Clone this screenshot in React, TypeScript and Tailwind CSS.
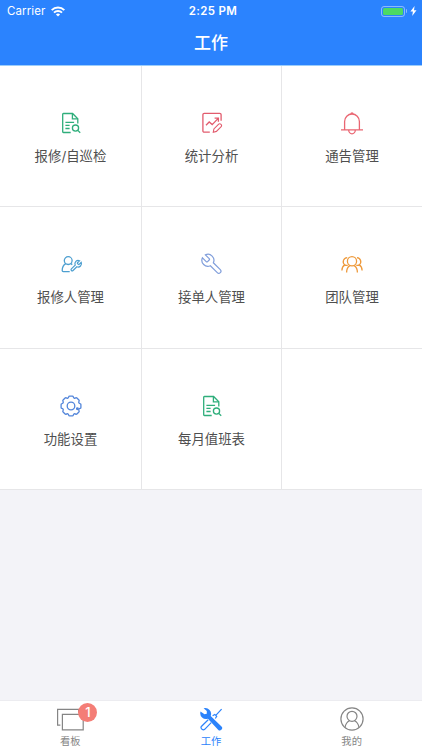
import type { ReactNode } from 'react'

const FONT = "font-['Inter','Noto_Sans_CJK_SC',sans-serif]"

function Icon({ className, children }: { className: string; children: ReactNode }) {
  return (
    <svg
      viewBox="0 0 22 22"
      fill="none"
      stroke="currentColor"
      strokeWidth="1.3"
      className={`h-[22px] w-[22px] overflow-visible ${className}`}
    >
      {children}
    </svg>
  )
}

function DocSearchIcon() {
  return (
    <Icon className="text-[#2fae7b]">
      <path d="M10.7 20.5H3.4a.7.7 0 0 1-.7-.7V2.2a.7.7 0 0 1 .7-.7h9.2l5.2 5.3v4.6" />
      <path d="M12.4 1.5v5.4h5.4M5.4 10.3h8.7M5.4 13.3h4.2M5.4 16.5h4.2" />
      <circle cx="15.5" cy="16.1" r="3.1" />
      <path d="m17.8 18.4 2.4 2.4" />
    </Icon>
  )
}

function ChartIcon() {
  return (
    <Icon className="text-[#e25c6e]">
      <path d="M8.8 20.2H3.2a1.3 1.3 0 0 1-1.3-1.3V2.7a1.3 1.3 0 0 1 1.3-1.3h15.6a1.3 1.3 0 0 1 1.3 1.3v6" />
      <path d="M5 13.2 8.2 10l3 2.6 6-6.2M13.6 6.2h3.8v3.6" />
      <path d="m12.3 20.2.6-3.3 4.8-4.8a1.4 1.4 0 0 1 2 0l.5.5a1.4 1.4 0 0 1 0 2l-4.8 4.8z" strokeWidth="1.1" />
    </Icon>
  )
}

function BellIcon() {
  return (
    <Icon className="text-[#ea6672]">
      <path d="M3.6 17.7V9.4a7.4 7.4 0 0 1 14.8 0v8.3M0 17.8h22M7.7 18a3.3 3.8 0 0 0 6.6 0" />
      <path d="M10 2a1 1 0 1 1 2 0" />
    </Icon>
  )
}

function UserWrenchIcon() {
  return (
    <Icon className="text-[#4d9fd0]">
      <circle cx="8.2" cy="7.6" r="3.9" />
      <path d="M5.8 10.6c-2.3 1.3-3.6 3.7-3.6 6.9 0 .7.4 1.1 1.1 1.1h6.4M10.8 10.6l1.5 1" />
      <path
        transform="translate(9.4 6.3) scale(.55)"
        strokeWidth="2.2"
        d="M14.7 6.3a1 1 0 0 0 0 1.4l1.6 1.6a1 1 0 0 0 1.4 0l3.77-3.77a6 6 0 0 1-7.94 7.94l-6.91 6.91a2.12 2.12 0 0 1-3-3l6.91-6.91a6 6 0 0 1 7.94-7.94l-3.76 3.76z"
      />
    </Icon>
  )
}

function WrenchIcon() {
  return (
    <Icon className="text-[#809edb]">
      <path
        transform="matrix(-1 0 0 1 22.9 -.7)"
        strokeWidth="1.2"
        d="M14.7 6.3a1 1 0 0 0 0 1.4l1.6 1.6a1 1 0 0 0 1.4 0l3.77-3.77a6 6 0 0 1-7.94 7.94l-6.91 6.91a2.12 2.12 0 0 1-3-3l6.91-6.91a6 6 0 0 1 7.94-7.94l-3.76 3.76z"
      />
    </Icon>
  )
}

function TeamIcon() {
  return (
    <Icon className="text-[#ee9a3c]">
      <circle cx="11" cy="8.2" r="4.6" />
      <path d="M5.6 19.6c0-3.6 1-5.6 3.2-7M16.4 19.6c0-3.6-1-5.6-3.2-7" />
      <path d="M6.2 4.6a4.1 4.1 0 0 0-2.4 7.3c-2 1.1-2.9 3-2.9 5.7M16 4.6a4.1 4.1 0 0 1 2.2 7.3c2 1.1 2.9 3 2.9 5.7" />
      <path d="M3.8 12.1c.9.4 1.9.4 2.9 0M18.2 12.1c-.9.4-1.9.4-2.9 0" />
    </Icon>
  )
}

function GearIcon() {
  return (
    <Icon className="text-[#5285da]">
      <g transform="translate(-1 -1)" strokeLinejoin="round">
        <path d="M9.7 2.9a1 1 0 0 1 1-.8h2.6a1 1 0 0 1 1 .8c.2 1.2 1.3 1.7 2.4 1a1 1 0 0 1 1.2.1l2 2a1 1 0 0 1 .1 1.3c-.6 1-.2 2.1 1 2.3a1 1 0 0 1 .9 1v2.8a1 1 0 0 1-.9 1c-1.2.2-1.6 1.3-1 2.3a1 1 0 0 1-.1 1.3l-2 2a1 1 0 0 1-1.2.1c-1.1-.7-2.2-.2-2.4 1a1 1 0 0 1-1 .8h-2.6a1 1 0 0 1-1-.8c-.2-1.2-1.3-1.7-2.4-1a1 1 0 0 1-1.2-.1l-2-2a1 1 0 0 1-.1-1.3c.6-1 .2-2.1-1-2.3a1 1 0 0 1-.9-1v-2.8a1 1 0 0 1 .9-1c1.2-.2 1.6-1.3 1-2.3A1 1 0 0 1 4.100 6l2-2a1 1 0 0 1 1.200-.1c1.100.7 2.200.2 2.400-1z" />
        <circle cx="12" cy="12" r="3.8" />
        <circle cx="18.4" cy="14.8" r=".8" fill="currentColor" />
      </g>
    </Icon>
  )
}

const menu = [
  { label: '报修/自巡检', icon: <DocSearchIcon /> },
  { label: '统计分析', icon: <ChartIcon /> },
  { label: '通告管理', icon: <BellIcon /> },
  { label: '报修人管理', icon: <UserWrenchIcon /> },
  { label: '接单人管理', icon: <WrenchIcon /> },
  { label: '团队管理', icon: <TeamIcon /> },
  { label: '功能设置', icon: <GearIcon /> },
  { label: '每月值班表', icon: <DocSearchIcon /> },
  { label: '', icon: null },
]

function StatusBar() {
  return (
    <div className="grid h-[22px] grid-cols-3 items-center pr-[5px] pl-[7px] text-[11.5px] leading-none">
      <div className="flex items-center gap-[6px]">
        <span className="pt-px tracking-[0.1px]">Carrier</span>
        <svg viewBox="0 0 14 11" className="h-[11px] w-[14px]" fill="none" stroke="currentColor" strokeWidth="2">
          <path d="M.7 4.100a9 9 0 0 1 12.600 0M3 6.600a5.700 5.700 0 0 1 8 0" />
          <path d="M7 10.600 4.900 8.500a3 3 0 0 1 4.200 0z" fill="currentColor" stroke="none" />
        </svg>
      </div>
      <span className="pt-px pl-0.5 text-center font-semibold tracking-[0.3px]">2:25 PM</span>
      <div className="flex items-center justify-end">
        <div className="h-[11px] w-6 rounded-[3px] border border-white/45 p-px">
          <div className="h-full rounded-[1.5px] bg-[#4cd964]" />
        </div>
        <div className="ml-px h-1 w-[1.5px] rounded-r-full bg-white/45" />
        <svg viewBox="0 0 7 10" className="ml-[3px] h-[10px] w-[7px]" fill="currentColor">
          <path d="M4.600 0 .4 5.600h2.500L2.200 10l4.300-5.800H4z" />
        </svg>
      </div>
    </div>
  )
}

function BoardIcon() {
  return (
    <svg viewBox="0 0 28 24" className="h-6 w-7" fill="none" stroke="currentColor" strokeWidth="1.2">
      <path d="M4.4 18.2H1.6V2.4h21v3.2" />
      <path d="M6.4 7.4h20.8v15.4H6.4z" />
    </svg>
  )
}

function ToolsIcon() {
  return (
    <svg viewBox="0 0 24 24" className="h-6 w-6" fill="none" stroke="currentColor" strokeWidth="1.2">
      <path d="m22.6 2.2-5.8 6.2M13.6 8.8l2.2-1.4 1.9 1.9-1.4 2.2" />
      <path d="m9.2 12.8-6.6 6.4a1.9 1.9 0 0 0 0 2.6l.5.5a1.9 1.9 0 0 0 2.6 0l6.5-6.6" />
      <path
        d="M4.6 1.2 7.8 4v2.8L5.5 7.3 1.5 4.6a5.8 5.8 0 0 0 7.4 7.1l10.2 11a2.3 2.3 0 0 0 3.4-3.2L11.7 9A5.9 5.9 0 0 0 4.6 1.2z"
        fill="currentColor"
        stroke="none"
      />
    </svg>
  )
}

function ProfileIcon() {
  return (
    <svg viewBox="0 0 24 24" className="h-6 w-6" fill="none" stroke="currentColor" strokeWidth="1.2">
      <circle cx="12" cy="12" r="11.1" />
      <circle cx="12" cy="9.3" r="5" />
      <path d="M5 20.5c.6-3.5 2-5.7 4.5-6.8M19 20.5c-.6-3.5-2-5.7-4.5-6.8" />
    </svg>
  )
}

function Tab({ label, active, badge, children }: { label: string; active?: boolean; badge?: number; children: ReactNode }) {
  return (
    <div className={`flex flex-col items-center pt-[6px] ${active ? 'text-[#2b83fb]' : 'text-[#858585]'}`}>
      <div className="relative">
        {children}
        {badge && (
          <span className="absolute -top-[4px] left-[22px] flex h-[19px] w-[19px] items-center justify-center rounded-full bg-[#f47d76] text-[13px] leading-none font-medium text-white">
            {badge}
          </span>
        )}
      </div>
      <span className="mt-[2px] text-[10.3px] leading-4">{label}</span>
    </div>
  )
}

export default function App() {
  return (
    <div className={`flex h-[750px] w-[422px] flex-col overflow-hidden bg-[#f3f3f8] ${FONT}`}>
      <header className="h-[66px] shrink-0 border-b border-[#9bcdfa] bg-[#2b83fe] text-white">
        <StatusBar />
        <h1 className="text-center text-[17px] leading-[43px] font-medium">工作</h1>
      </header>

      <main className="grid h-[424px] grid-cols-[142px_140px_140px] grid-rows-[141px_142px_141px] bg-white">
        {menu.map((item, i) => (
          <div
            key={i}
            className={`flex flex-col items-center border-b border-[#e6e6e8] pt-[45.5px] ${i % 3 < 2 ? 'border-r' : ''}`}
          >
            {item.icon}
            <span className="mt-[12.5px] text-[13.4px] leading-5 text-[#4f4f4f]">{item.label}</span>
          </div>
        ))}
      </main>

      <nav className="mt-auto grid h-[50px] grid-cols-3 border-t border-[#ececf0] bg-white">
        <Tab label="看板" badge={1}>
          <BoardIcon />
        </Tab>
        <Tab label="工作" active>
          <ToolsIcon />
        </Tab>
        <Tab label="我的">
          <ProfileIcon />
        </Tab>
      </nav>
    </div>
  )
}
